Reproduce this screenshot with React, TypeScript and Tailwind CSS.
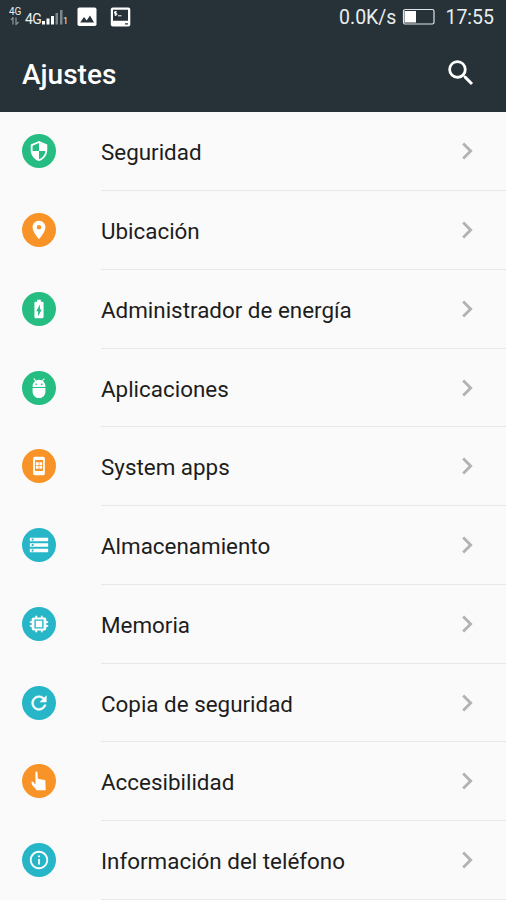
import React from "react";

interface Ajuste {
  titulo: string;
  color: string;
  icono: React.ReactNode;
}

const VERDE = "bg-[#26bd83]";
const NARANJA = "bg-[#f89427]";
const CELESTE = "bg-[#27b6c8]";

const ajustes: Ajuste[] = [
  {
    titulo: "Seguridad",
    color: VERDE,
    icono: (
      <path d="M12 1 3 5v6c0 5.55 3.84 10.74 9 12 5.16-1.26 9-6.45 9-12V5l-9-4zm0 10.99h7c-.53 4.12-3.28 7.79-7 8.94V12H5V6.3l7-3.11v8.8z" />
    ),
  },
  {
    titulo: "Ubicación",
    color: NARANJA,
    icono: (
      <path d="M12 2C8.13 2 5 5.13 5 9c0 5.25 7 13 7 13s7-7.75 7-13c0-3.87-3.13-7-7-7zm0 9.5a2.5 2.5 0 0 1 0-5 2.5 2.5 0 0 1 0 5z" />
    ),
  },
  {
    titulo: "Administrador de energía",
    color: VERDE,
    icono: (
      <path d="M15.67 4H14V2h-4v2H8.33C7.6 4 7 4.6 7 5.33v15.33C7 21.4 7.6 22 8.33 22h7.33c.74 0 1.34-.6 1.34-1.33V5.33C17 4.6 16.4 4 15.67 4zM11 20v-5.5H9L13 7v5.5h2L11 20z" />
    ),
  },
  {
    titulo: "Aplicaciones",
    color: VERDE,
    icono: (
      <path d="M5 16c0 3.87 3.13 7 7 7s7-3.13 7-7v-4H5v4zM16.12 4.37l2.1-2.1-.82-.83-2.3 2.31C14.16 3.28 13.12 3 12 3s-2.16.28-3.09.75L6.6 1.44l-.82.83 2.1 2.1C6.14 5.64 5 7.68 5 10v1h14v-1c0-2.32-1.14-4.36-2.88-5.63zM9 9c-.55 0-1-.45-1-1s.45-1 1-1 1 .45 1 1-.45 1-1 1zm6 0c-.55 0-1-.45-1-1s.45-1 1-1 1 .45 1 1-.45 1-1 1z" />
    ),
  },
  {
    titulo: "System apps",
    color: NARANJA,
    icono: (
      <>
        <path
          fillRule="evenodd"
          d="M7.5 2h9A1.9 1.9 0 0 1 18.4 3.9v16.2A1.9 1.9 0 0 1 16.5 22h-9A1.9 1.9 0 0 1 5.6 20.1V3.9A1.9 1.9 0 0 1 7.5 2zM7.6 5.5v12h8.8v-12z"
        />
        <path d="M8.5 8h3.1v3.1H8.5zM12.4 8h3.1v3.1h-3.1zM8.5 12h3.1v3.1H8.5zM12.4 12h3.1v3.1h-3.1z" />
      </>
    ),
  },
  {
    titulo: "Almacenamiento",
    color: CELESTE,
    icono: (
      <path d="M2 20h20v-4H2v4zm2-3h2v2H4v-2zM2 4v4h20V4H2zm4 3H4V5h2v2zm-4 7h20v-4H2v4zm2-3h2v2H4v-2z" />
    ),
  },
  {
    titulo: "Memoria",
    color: CELESTE,
    icono: (
      <path d="M15.5 8.5h-7v7h7v-7zM22 11V9h-2V7c0-1.1-.9-2-2-2h-2V3h-2v2h-4V3H8v2H6c-1.1 0-2 .9-2 2v2H2v2h2v2H2v2h2v2c0 1.1.9 2 2 2h2v2h2v-2h4v2h2v-2h2c1.1 0 2-.9 2-2v-2h2v-2h-2v-2h2zm-5 6H7V7h10v10z" />
    ),
  },
  {
    titulo: "Copia de seguridad",
    color: CELESTE,
    icono: (
      <path
        d="M17.65 6.35A7.958 7.958 0 0 0 12 4c-4.42 0-7.99 3.58-7.99 8s3.57 8 7.99 8c3.73 0 6.84-2.55 7.73-6h-2.08A5.99 5.99 0 0 1 12 18c-3.31 0-6-2.69-6-6s2.69-6 6-6c1.66 0 3.14.69 4.22 1.78L13 11h7V4l-2.35 2.35z"
        stroke="#fff"
        strokeWidth=".5"
      />
    ),
  },
  {
    titulo: "Accesibilidad",
    color: NARANJA,
    icono: (
      <path d="M8.1 2.6a1.1 1.1 0 0 1 2.2 0l.5 7.6c.4-.8 2.2-.8 2.6.2.5-.6 2.2-.5 2.6.4.6-.6 2.6-.2 2.9.9l.3 8v2.300H9.300L8 20.300l-3.600-3.900-.6-3.400c.7-.7 1.800-.5 2.200.3l1.200 1.800 1 .2z" />
    ),
  },
  {
    titulo: "Información del teléfono",
    color: CELESTE,
    icono: (
      <path d="M11 17h2v-6h-2v6zm1-15C6.48 2 2 6.48 2 12s4.48 10 10 10 10-4.48 10-10S17.52 2 12 2zm0 18c-4.41 0-8-3.59-8-8s3.59-8 8-8 8 3.59 8 8-3.59 8-8 8zM11 9h2V7h-2v2z" />
    ),
  },
];

const BarraEstado: React.FC = () => (
  <div className="flex h-[34px] items-start pl-[9px] pr-[12px] text-[#e9eef0]">
    <div className="flex w-4 flex-col pt-[7px]">
      <span className="text-[10px] leading-[10px]">4G</span>
      <svg width="10" height="8" viewBox="0 0 10 8" className="ml-[1px]" fill="none" stroke="#8d979b" strokeWidth="1.2">
        <path d="M3 7.5V.5L1 3M6 .5v7L8.5 5" />
      </svg>
    </div>
    <span className="mt-[11px] w-[17px] text-[14px] leading-4 tracking-[-0.5px]">4G</span>
    <svg width="21" height="16" viewBox="0 0 21 16" className="mt-[9px]">
      <path d="M0 12h3v3.500H0zM4.500 9.500h3v6h-3zM9 7h3v8.500H9z" fill="#fff" />
      <path d="M13.500 4h2.500v11.500h-2.500zM18 1h2.500v14.500H18z" fill="#7b868b" />
    </svg>
    <span className="mt-[16px] w-[4px] text-[9px] leading-[10px]">1</span>
    <svg width="20" height="20" viewBox="0 0 20 20" className="ml-[10px] mt-[7px]">
      <rect x=".5" y=".5" width="19" height="18.5" rx="1.8" fill="#fff" />
      <path d="M3.2 15.5 7 10l2.7 3.5L13 8.5l4 7z" fill="#263238" />
    </svg>
    <svg width="21" height="20" viewBox="0 0 21 20" className="ml-[13px] mt-[7px]">
      <rect x=".8" y=".5" width="19.5" height="19" rx="2" fill="#fff" />
      <path d="M3 2.8h15v11H3zM15 16.3h3v1.3h-3z" fill="#263238" />
      <path d="M6.8 4.8H4.5v1.6h2.3V8H4.5M5.6 4v4.8M8 8.8h3.5" fill="none" stroke="#fff" />
    </svg>
    <div className="ml-auto flex items-start">
      <span className="mt-[7px] text-[19.5px] leading-[22px]">0.0K/s</span>
      <svg width="34" height="17" viewBox="0 0 34 17" className="ml-[6px] mt-[8px]">
        <rect x="1.5" y="1.5" width="30.5" height="14.5" rx="1.8" fill="none" stroke="#dfe4e6" strokeWidth="1.2" />
        <rect x="2.5" y="3" width="11.5" height="11.5" fill="#fff" />
      </svg>
      <span className="ml-[9px] mt-[7px] text-[19.5px] leading-[22px]">17:55</span>
    </div>
  </div>
);

const Fila: React.FC<{ ajuste: Ajuste }> = ({ ajuste }) => (
  <li className="flex h-[78.75px] pl-[22px]">
    <div className="flex w-[79px] items-center">
      <span className={`-mt-[1px] flex size-[34px] items-center justify-center rounded-full ${ajuste.color}`}>
        <svg width="22" height="22" viewBox="0 0 24 24" fill="#fff">
          {ajuste.icono}
        </svg>
      </span>
    </div>
    <div className="flex flex-1 items-center justify-between border-b border-[#e8e8e8] pr-[22px]">
      <span className="pt-[2px] text-[22.4px] leading-[30px] text-[#1d1d1d]">{ajuste.titulo}</span>
      <svg width="34" height="34" viewBox="0 0 24 24" fill="#b2b2b2">
        <path d="M8.59 16.59 13.17 12 8.59 7.41 10 6l6 6-6 6-1.41-1.41z" />
      </svg>
    </div>
  </li>
);

const App: React.FC = () => {
  return (
    <div className="h-[900px] w-[506px] overflow-hidden bg-[#fafafa] font-['Roboto',sans-serif]">
      <header className="h-[112.4px] bg-[#263238]">
        <BarraEstado />
        <div className="flex h-[78px] items-center justify-between pl-[22px] pr-[28px]">
          <h1 className="pt-[4px] text-[28px] font-medium leading-8 text-white">Ajustes</h1>
          <svg width="34" height="34" viewBox="0 0 24 24" fill="#fff">
            <path d="M15.5 14h-.79l-.28-.27A6.471 6.471 0 0 0 16 9.5 6.5 6.5 0 1 0 9.5 16c1.61 0 3.09-.59 4.23-1.57l.27.28v.79l5 4.99L20.49 19l-4.99-5zm-6 0C7.01 14 5 11.99 5 9.5S7.01 5 9.5 5 14 7.01 14 9.5 11.99 14 9.5 14z" />
          </svg>
        </div>
      </header>
      <ul>
        {ajustes.map((ajuste) => (
          <Fila key={ajuste.titulo} ajuste={ajuste} />
        ))}
      </ul>
    </div>
  );
};

export default App;
